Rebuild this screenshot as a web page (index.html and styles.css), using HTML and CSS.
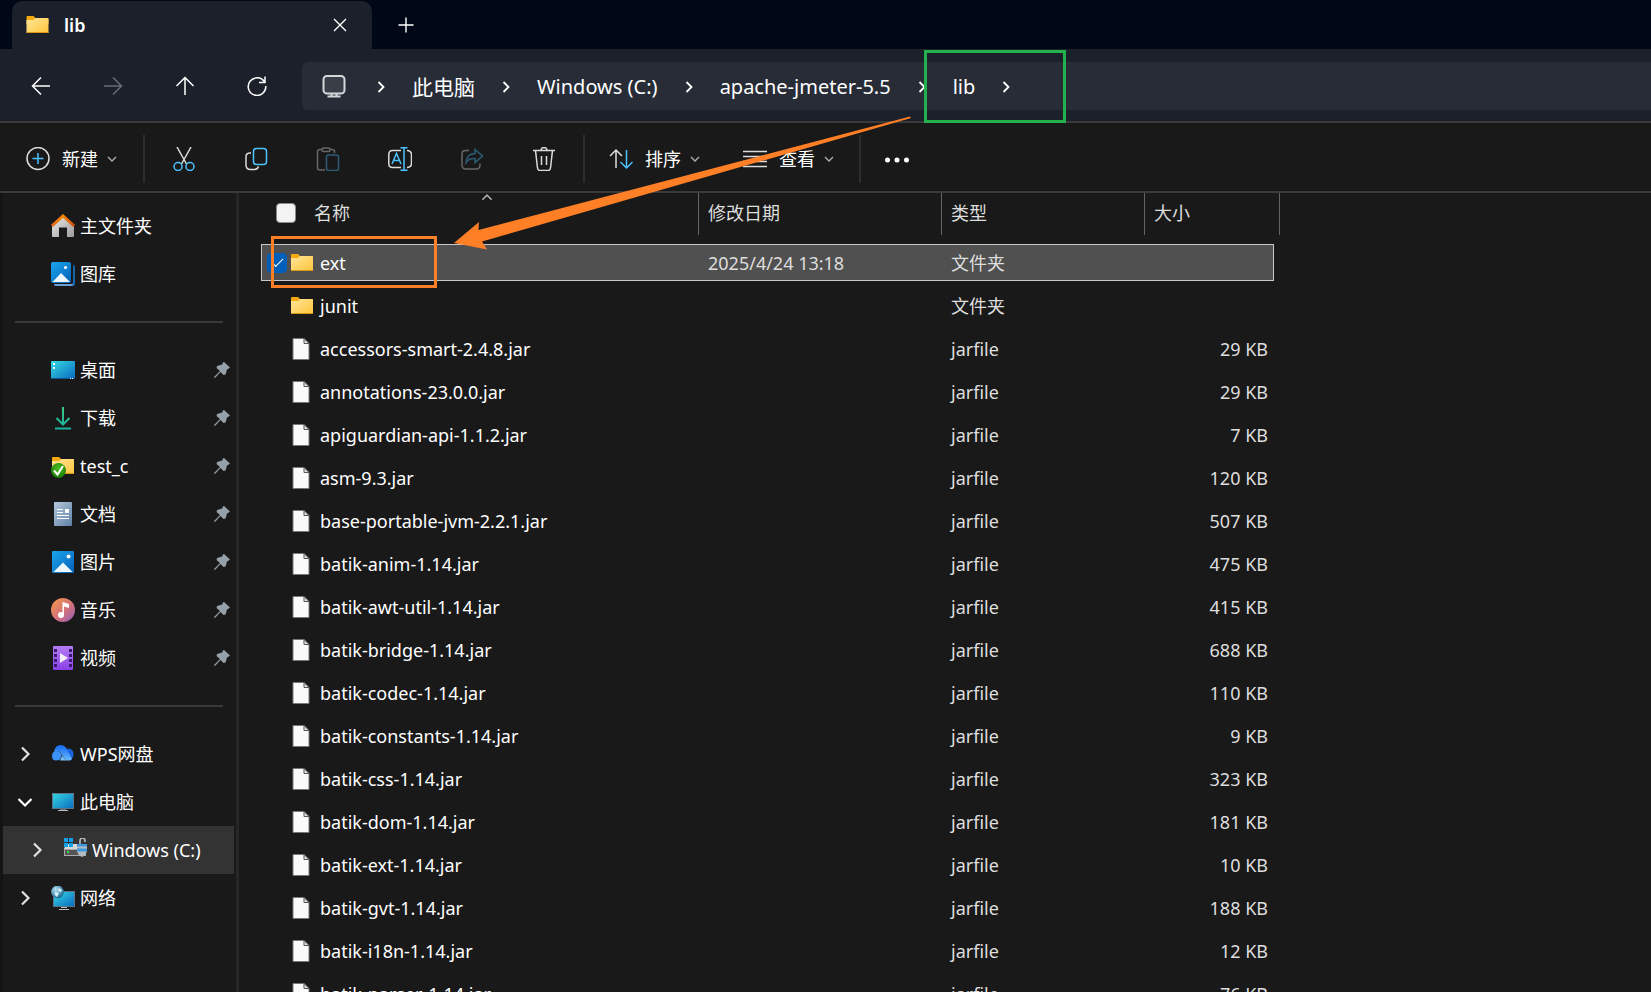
FILE: index.html
```html
<!DOCTYPE html>
<html lang="zh-CN">
<head>
<meta charset="UTF-8" />
<meta name="viewport" content="width=device-width, initial-scale=1.0" />
<title>lib</title>
<link rel="stylesheet" href="styles.css">
</head>
<body>

<svg class="defs" aria-hidden="true">
  <defs>
    <linearGradient id="gFolder" x1="0" y1="0" x2="1" y2="1"><stop offset="0" stop-color="#ffe59a"/><stop offset="1" stop-color="#ffc53a"/></linearGradient>
    <linearGradient id="gBlue" x1="0" y1="0" x2="1" y2="1"><stop offset="0" stop-color="#1ba6ec"/><stop offset="1" stop-color="#0560b8"/></linearGradient>
    <linearGradient id="gCyan" x1="0" y1="0" x2="1" y2="1"><stop offset="0" stop-color="#35dbe3"/><stop offset="1" stop-color="#0a68c0"/></linearGradient>
    <linearGradient id="gGrey" x1="0" y1="0" x2="1" y2="1"><stop offset="0" stop-color="#ececec"/><stop offset="1" stop-color="#9b9b9b"/></linearGradient>
    <linearGradient id="gRoof" x1="0" y1="0" x2="1" y2="0"><stop offset="0" stop-color="#e06410"/><stop offset=".5" stop-color="#f48a0a"/><stop offset="1" stop-color="#d4480e"/></linearGradient>
    <linearGradient id="gDoc" x1="0" y1="0" x2="1" y2="1"><stop offset="0" stop-color="#b4c8dc"/><stop offset="1" stop-color="#5f80a6"/></linearGradient>
    <linearGradient id="gMusic" x1="0" y1="0" x2="1" y2="1"><stop offset="0.1" stop-color="#f29050"/><stop offset=".6" stop-color="#cf6f80"/><stop offset="1" stop-color="#8f5cc0"/></linearGradient>
    <linearGradient id="gVideo" x1="0" y1="0" x2="0" y2="1"><stop offset="0" stop-color="#b47cf4"/><stop offset="1" stop-color="#8a3fe6"/></linearGradient>
    <linearGradient id="gDown" x1="0" y1="0" x2="0" y2="24" gradientUnits="userSpaceOnUse"><stop offset="0" stop-color="#3ccb80"/><stop offset="1" stop-color="#16b0a0"/></linearGradient>
    <linearGradient id="gCloud" x1="0" y1="0" x2="0" y2="1"><stop offset="0" stop-color="#1268f0"/><stop offset="1" stop-color="#68bafc"/></linearGradient>
    <radialGradient id="gGreen" cx=".5" cy=".35" r=".65"><stop offset="0" stop-color="#4cc022"/><stop offset="1" stop-color="#1a7a08"/></radialGradient>
    <radialGradient id="gGlobe" cx=".35" cy=".3" r=".7"><stop offset="0" stop-color="#b8e2f2"/><stop offset="1" stop-color="#1d6c96"/></radialGradient>
  </defs>
  <symbol id="folder" viewBox="0 0 22 18">
    <path d="M0 1q0-1 1-1h6l2 2h12q1 0 1 1v5H0z" fill="#f5aa10"/>
    <path d="M0 4h7l2-2h12q1 0 1 1v13.500q0 .5-.5.500H.5q-.5 0-.5-.5z" fill="url(#gFolder)"/>
    <path d="M0 16.500h22" stroke="#d9971a"/>
  </symbol>
  <symbol id="file" viewBox="0 0 18 22">
    <path d="M1 .5h11l5 5v16H1z" fill="#fafafa" stroke="#777"/>
    <path d="M12 .5v5h5z" fill="#e4e4e4" stroke="#555"/>
  </symbol>
  <symbol id="crumb" viewBox="0 0 8 12"><path d="M1.500 1l5 5-5 5" fill="none" stroke="currentColor" stroke-width="1.800"/></symbol>
  <symbol id="caret" viewBox="0 0 10 6"><path d="M1 1l4 4 4-4" fill="none" stroke="currentColor" stroke-width="1.300"/></symbol>
  <symbol id="tree" viewBox="0 0 16 16"><path d="M5 1.500L11.500 8 5 14.500" fill="none" stroke="currentColor" stroke-width="2.200"/></symbol>
  <symbol id="pin" viewBox="0 0 16 16">
    <path d="M10 0l6 5.500-2 1.500-1 .5-1.500 5-2 .500-3-3L1.500 15.500 0 16l.5-1.500L6 9 2.500 6l.5-2 5-1.500L9 .5z" fill="#95a0a8"/>
  </symbol>
  <symbol id="monitor" viewBox="0 0 24 24">
    <rect x="1" y="3" width="22" height="16" fill="url(#gCyan)"/>
    <path d="M1.500 3.500h21v15h-21z" fill="none" stroke="#5d7484"/>
    <path d="M9 19h6v2H9z" fill="#667"/><path d="M7 20.500h10" stroke="#b8c0c6"/>
  </symbol>
</svg>

<header class="tabs">
  <div class="tab">
    <svg class="tab-icon"><use href="#folder"/></svg>
    <span class="tab-name">lib</span>
    <button class="tab-close" aria-label="关闭"><svg width="14" height="14" viewBox="0 0 14 14"><path d="M1 1l12 12M13 1L1 13"/></svg></button>
  </div>
  <button class="tab-new" aria-label="新建标签页"><svg width="16" height="16" viewBox="0 0 16 16"><path d="M8 .5v15M.5 8h15"/></svg></button>
</header>

<nav class="navbar">
  <button class="nav-btn" aria-label="后退"><svg viewBox="0 0 20 20"><path d="M19 10H1.500M10 1.500L1.500 10l8.500 8.500"/></svg></button>
  <button class="nav-btn" aria-label="前进" disabled><svg viewBox="0 0 20 20"><path d="M1 10h17.500M10 1.500l8.500 8.500-8.500 8.500"/></svg></button>
  <button class="nav-btn" aria-label="向上"><svg viewBox="0 0 20 20"><path d="M10 19V1.500M1.500 10L10 1.500l8.500 8.500"/></svg></button>
  <button class="nav-btn" aria-label="刷新"><svg viewBox="0 0 20 20"><path d="M17.500 6A8.800 8.800 0 1 0 18.800 10M18 .5V6.500h-6"/></svg></button>
  <div class="address">
    <svg class="pc" viewBox="0 0 24 24"><rect x="1.500" y="1" width="21" height="17.500" rx="3.500" fill="#3a3e47"/><path d="M9.500 18.500v3M14.500 18.500v3M5.500 21.500h13"/></svg>
    <svg class="crumb"><use href="#crumb"/></svg>
    <button class="part cjk">此电脑</button>
    <svg class="crumb"><use href="#crumb"/></svg>
    <button class="part">Windows (C:)</button>
    <svg class="crumb"><use href="#crumb"/></svg>
    <button class="part">apache-jmeter-5.5</button>
    <svg class="crumb"><use href="#crumb"/></svg>
    <button class="part">lib</button>
    <svg class="crumb"><use href="#crumb"/></svg>
  </div>
</nav>

<div class="toolbar">
  <button class="tool new">
    <svg viewBox="0 0 24 24"><circle cx="12" cy="11.500" r="11"/><path class="blue" d="M12 6v11M6.500 11.500h11"/></svg>
    <span>新建</span>
    <svg class="caret"><use href="#caret"/></svg>
  </button>
  <span class="sep"></span>
  <div class="icons">
    <button class="tool" aria-label="剪切"><svg viewBox="0 0 24 24"><path d="M5 0l9.500 17M19 0L9.500 17"/><circle class="blue" cx="6" cy="19.500" r="4"/><circle class="blue" cx="18" cy="19.500" r="4"/></svg></button>
    <button class="tool" aria-label="复制"><svg viewBox="0 0 24 24"><path d="M7 6H5.500Q2 6.500 2 9.500V18q0 4.500 4.500 4.500h4q3 0 4-3"/><rect class="blue" x="9.500" y="1.500" width="13" height="16" rx="3"/></svg></button>
    <button class="tool" aria-label="粘贴" disabled><svg viewBox="0 0 24 24"><path d="M6 2.500H4q-2.500 0-2.500 2v16.500q0 2 2.500 2h5M14 2.500h2q2.500 0 2.500 2V6"/><rect x="6" y="1" width="8" height="3.500" rx="1.500"/><rect class="blue" x="10.500" y="8" width="12" height="15.500" rx="2"/></svg></button>
    <button class="tool" aria-label="重命名"><svg viewBox="0 0 24 24"><path d="M13 3.500H4.500Q.8 3.500.8 7.500v9q0 4 3.700 4H13M19 3.500q4.500.5 4.500 4v9q0 3.500-4.500 4"/><path class="blue" d="M16 1v22M12.500 .8h7M12.500 23.300h7M4 17L8.500 6.500 13 17M5.500 13.500h6"/></svg></button>
    <button class="tool" aria-label="共享" disabled><svg viewBox="0 0 24 24"><path d="M9 3.500H5.500Q2 3.500 2 7v11q0 4 4 4h10q4 0 4-4v-1.500"/><path class="blue" d="M15 2.500l7.500 6.500-7.500 6.500v-4Q9 11 6 15.500 6.500 7 15 6.500z"/></svg></button>
    <button class="tool" aria-label="删除"><svg viewBox="0 0 24 24"><path d="M1 3.500h22M9 3.500q0-3 3-3t3 3M3.500 3.500l2 17.500q.3 2.500 2.500 2.500h8q2.200 0 2.500-2.500l2-17.500M9.500 9v9M14.500 9v9"/></svg></button>
  </div>
  <span class="sep"></span>
  <button class="tool sort">
    <svg viewBox="0 0 24 24"><path d="M7 21V3M1 9l6-6 6 6"/><path class="blue" d="M17.500 3v18M11.500 15l6 6 6-6"/></svg>
    <span>排序</span>
    <svg class="caret"><use href="#caret"/></svg>
  </button>
  <button class="tool view">
    <svg viewBox="0 0 24 24"><path d="M0 4.500h24M0 9.500h24M0 14.500h24M0 19.500h24"/></svg>
    <span>查看</span>
    <svg class="caret"><use href="#caret"/></svg>
  </button>
  <span class="sep"></span>
  <button class="tool more" aria-label="更多"><svg viewBox="0 0 24 24"><circle cx="2.500" cy="13" r="2.500"/><circle cx="12" cy="13" r="2.500"/><circle cx="21.500" cy="13" r="2.500"/></svg></button>
</div>

<main class="content">
  <aside class="sidebar">
    <ul>
      <li>
        <svg class="ico" viewBox="0 0 24 24"><path d="M1 11L12 2l11 9v11q0 1-1 1h-6v-9.500H8V23H2q-1 0-1-1z" fill="url(#gGrey)"/><path d="M.8 12L12 2l11.200 10" fill="none" stroke="url(#gRoof)" stroke-width="3"/></svg>
        <span>主文件夹</span>
      </li>
      <li>
        <svg class="ico" viewBox="0 0 24 24"><path d="M22 3q2 0 2 2v17q0 2-2 2H5q-2 0-2-2h17q2 0 2-2z" fill="#1565ac"/><path d="M3 22h19q0 2-2 2H5q-2 0-2-2z" fill="#6a9fd8"/><rect width="20" height="21" rx="2" fill="url(#gBlue)"/><path d="M1.500 20l8.500-9 9 9z" fill="#eef6ff"/><circle cx="14.500" cy="5.500" r="1.600" fill="#fff"/></svg>
        <span>图库</span>
      </li>
      <li class="line"></li>
      <li>
        <svg class="ico" viewBox="0 0 24 24"><rect y="3" width="24" height="18" rx="1" fill="url(#gCyan)"/><path d="M2 5h2v2H2zM2 9h2v2H2z" fill="#fff"/><path d="M0 20.500h24" stroke="#0b5798"/><path d="M19 20h1v1h-1zM21 20h1v1h-1z" fill="#fff"/></svg>
        <span>桌面</span><svg class="pin"><use href="#pin"/></svg>
      </li>
      <li>
        <svg class="ico" viewBox="0 0 24 24"><path d="M12 1v17M5.500 12l6.500 6.500 6.500-6.500M4 22.500h16" fill="none" stroke="url(#gDown)" stroke-width="2"/></svg>
        <span>下载</span><svg class="pin"><use href="#pin"/></svg>
      </li>
      <li>
        <svg class="ico" viewBox="0 0 24 24"><use href="#folder" x="1" y="3" width="22" height="18"/><circle cx="7.500" cy="16.500" r="7.500" fill="url(#gGreen)"/><path d="M3 16.500l3.500 4L12 12" fill="none" stroke="#fff" stroke-width="2"/></svg>
        <span>test_c</span><svg class="pin"><use href="#pin"/></svg>
      </li>
      <li>
        <svg class="ico" viewBox="0 0 24 24"><rect x="3" width="18" height="24" rx="1" fill="url(#gDoc)"/><path d="M6 7.500h6M6 10.500h6M6 13.500h12M6 16.500h12" stroke="#fff"/><path d="M14 7h4v4h-4z" fill="#fff"/></svg>
        <span>文档</span><svg class="pin"><use href="#pin"/></svg>
      </li>
      <li>
        <svg class="ico" viewBox="0 0 24 24"><rect x="1" y="1" width="22" height="22" rx="1" fill="url(#gBlue)"/><path d="M2.500 22L12 12.500l9.500 9.500z" fill="#eef6ff"/><circle cx="17.500" cy="6.500" r="2" fill="#fff"/></svg>
        <span>图片</span><svg class="pin"><use href="#pin"/></svg>
      </li>
      <li>
        <svg class="ico" viewBox="0 0 24 24"><circle cx="12" cy="12" r="12" fill="url(#gMusic)"/><circle cx="10" cy="17" r="3" fill="#fff"/><path d="M11.500 4l6.500 2v4l-5-1.500V17h-1.500z" fill="#fff"/></svg>
        <span>音乐</span><svg class="pin"><use href="#pin"/></svg>
      </li>
      <li>
        <svg class="ico" viewBox="0 0 24 24"><rect x="2" width="20" height="24" rx="1" fill="url(#gVideo)"/><path d="M4.500 3v20M19.500 3v20" stroke="#3a1a6e" stroke-width="3" stroke-dasharray="3 2"/><path d="M9 7l8 5-8 5z" fill="#f4eefc"/></svg>
        <span>视频</span><svg class="pin"><use href="#pin"/></svg>
      </li>
      <li class="line"></li>
      <li>
        <svg class="tree"><use href="#tree"/></svg>
        <svg class="ico" viewBox="0 0 24 24"><path d="M14 8q4-3 7 0 2.500 3 1 7-1.500 3-4 3z" fill="#1a62dc"/><path d="M3 10Q4 3 9.500 3q4.500 0 6.500 4.500L21 17q-1 1.500-3 1.500-4 0-6-4-2-4.500-5-5.500z" fill="url(#gCloud)"/><path d="M1 14q0-5 5-5 3 0 5 4.500-1.500 1.500-2.500 4.500l-4 .500Q1 18 1 14z" fill="#3c92f6"/><path d="M9 18.500q.5-3 2.500-4.500 2 4 6 4.500z" fill="#74c0fc"/></svg>
        <span>WPS网盘</span>
      </li>
      <li>
        <svg class="tree open"><use href="#tree"/></svg>
        <svg class="ico"><use href="#monitor"/></svg>
        <span>此电脑</span>
      </li>
      <li class="child active">
        <svg class="tree"><use href="#tree"/></svg>
        <svg class="ico" viewBox="0 0 24 24"><path d="M1 11l2-5h18l2 5z" fill="#d8d8d8"/><rect x="1.500" y="11.500" width="21" height="6" fill="#555" stroke="#aaa"/><path d="M4 13h2v2H4z" fill="#30e030"/><path d="M1 0h4v4H1zM6 0h4v4H6zM1 5h4v4H1zM6 5h4v4H6z" fill="#12a0e8"/><path d="M17 6V3q0-3 2.500-3T22 3v1" fill="none" stroke="#b8bec4" stroke-width="1.600"/><path d="M14 6h10v5q0 6-5 8-5-2-5-8z" fill="#b4bcc4"/><path d="M14 6h10v2.500H14zM14 10.500h10l-.5 3h-9z" fill="#3a98dc"/></svg>
        <span>Windows (C:)</span>
      </li>
      <li>
        <svg class="tree"><use href="#tree"/></svg>
        <svg class="ico" viewBox="0 0 24 24"><rect x="2.500" y="5.500" width="21" height="15" fill="url(#gCyan)" stroke="#5d7484"/><path d="M8 23.500h10M10 21.500h6" stroke="#b8c0c6"/><circle cx="6.500" cy="6" r="6.300" fill="url(#gGlobe)"/><path d="M4 6l4 1-2 4q-3-2-2-5zM8 2l3 2-1 2-3-1z" fill="#d8eff6"/></svg>
        <span>网络</span>
      </li>
    </ul>
  </aside>

  <section class="files">
    <table>
      <thead>
        <tr>
          <th class="name"><div><input type="checkbox" aria-label="全选"><span>名称</span><svg class="asc"><use href="#caret"/></svg></div></th>
          <th class="date"><div>修改日期</div></th>
          <th class="type"><div>类型</div></th>
          <th class="size"><div>大小</div></th>
        </tr>
      </thead>
      <tbody>
        <tr class="selected"><td><input type="checkbox" aria-label="ext" checked><svg class="dir"><use href="#folder"/></svg>ext</td><td>2025/4/24 13:18</td><td>文件夹</td><td></td></tr>
        <tr><td><svg class="dir"><use href="#folder"/></svg>junit</td><td></td><td>文件夹</td><td></td></tr>
        <tr><td><svg class="jar"><use href="#file"/></svg>accessors-smart-2.4.8.jar</td><td></td><td>jarfile</td><td>29 KB</td></tr>
        <tr><td><svg class="jar"><use href="#file"/></svg>annotations-23.0.0.jar</td><td></td><td>jarfile</td><td>29 KB</td></tr>
        <tr><td><svg class="jar"><use href="#file"/></svg>apiguardian-api-1.1.2.jar</td><td></td><td>jarfile</td><td>7 KB</td></tr>
        <tr><td><svg class="jar"><use href="#file"/></svg>asm-9.3.jar</td><td></td><td>jarfile</td><td>120 KB</td></tr>
        <tr><td><svg class="jar"><use href="#file"/></svg>base-portable-jvm-2.2.1.jar</td><td></td><td>jarfile</td><td>507 KB</td></tr>
        <tr><td><svg class="jar"><use href="#file"/></svg>batik-anim-1.14.jar</td><td></td><td>jarfile</td><td>475 KB</td></tr>
        <tr><td><svg class="jar"><use href="#file"/></svg>batik-awt-util-1.14.jar</td><td></td><td>jarfile</td><td>415 KB</td></tr>
        <tr><td><svg class="jar"><use href="#file"/></svg>batik-bridge-1.14.jar</td><td></td><td>jarfile</td><td>688 KB</td></tr>
        <tr><td><svg class="jar"><use href="#file"/></svg>batik-codec-1.14.jar</td><td></td><td>jarfile</td><td>110 KB</td></tr>
        <tr><td><svg class="jar"><use href="#file"/></svg>batik-constants-1.14.jar</td><td></td><td>jarfile</td><td>9 KB</td></tr>
        <tr><td><svg class="jar"><use href="#file"/></svg>batik-css-1.14.jar</td><td></td><td>jarfile</td><td>323 KB</td></tr>
        <tr><td><svg class="jar"><use href="#file"/></svg>batik-dom-1.14.jar</td><td></td><td>jarfile</td><td>181 KB</td></tr>
        <tr><td><svg class="jar"><use href="#file"/></svg>batik-ext-1.14.jar</td><td></td><td>jarfile</td><td>10 KB</td></tr>
        <tr><td><svg class="jar"><use href="#file"/></svg>batik-gvt-1.14.jar</td><td></td><td>jarfile</td><td>188 KB</td></tr>
        <tr><td><svg class="jar"><use href="#file"/></svg>batik-i18n-1.14.jar</td><td></td><td>jarfile</td><td>12 KB</td></tr>
        <tr><td><svg class="jar"><use href="#file"/></svg>batik-parser-1.14.jar</td><td></td><td>jarfile</td><td>76 KB</td></tr>
      </tbody>
    </table>
  </section>
</main>

<!-- marks drawn over the window -->
<div class="mark mark-green"></div>
<div class="mark mark-orange"></div>
<svg class="arrow" viewBox="0 0 458 134"><path d="M0 127L25 106l-.5 8L456 .5l1 1.500L28 125.500l5 8z" fill="#ff7f27"/></svg>

</body>
</html>
```
FILE: styles.css
```css
* { box-sizing: border-box; }
body { margin: 0; height: 100vh; overflow: hidden; display: flex; flex-direction: column; background: #191919; color: #fff; font-family: "Noto Sans", "Noto Sans CJK SC", sans-serif; font-size: 18px; line-height: 24px; }
button { background: none; border: none; padding: 0; margin: 0; color: inherit; font: inherit; cursor: pointer; }
svg { display: block; flex: none; }
.defs { position: absolute; width: 0; height: 0; }

/* tabs */
.tabs { display: flex; flex: none; height: 49px; padding: 1px 0 0 12px; background: #000818; }
.tab { display: flex; align-items: center; width: 360px; padding: 0 25px 0 14px; background: #1b202b; border-radius: 10px 10px 0 0; }
.tab-icon { width: 23px; height: 18px; }
.tab-name { flex: 1; margin-left: 15px; font-weight: 600; }
.tab-close svg, .tab-new svg { fill: none; stroke: #fff; stroke-width: 1.4; }
.tab-new { display: flex; align-items: center; margin-left: 26px; }

/* navigation */
.navbar { display: flex; flex: none; align-items: center; height: 72px; padding: 2px 0 0 5px; background: #1b202b; }
.nav-btn { width: 72px; height: 48px; display: flex; align-items: center; justify-content: center; }
.nav-btn svg { width: 20px; height: 20px; fill: none; stroke: #fff; stroke-width: 1.5; }
.nav-btn:disabled svg { stroke: #6a6e76; }
.address { flex: 1; display: flex; align-items: center; gap: 27px; height: 48px; margin-left: 9px; padding: 2px 0 0 20px; background: #272c36; border-radius: 6px 0 0 6px; font-size: 20px; white-space: nowrap; }
.address .cjk { font-size: 21px; }
.pc { width: 24px; height: 24px; margin-right: 4px; fill: none; stroke: #d6d7da; stroke-width: 2; }
.crumb { width: 8px; height: 12px; }

/* commands */
.toolbar { display: flex; flex: none; align-items: center; height: 72px; border-top: 2px solid #3a3a3a; border-bottom: 2px solid #3a3a3a; padding: 4px 0 0 26px; }
.tool { display: flex; align-items: center; gap: 12px; }
.tool svg { width: 24px; height: 24px; fill: none; stroke: #dcdcdc; stroke-width: 1.5; }
.tool svg .blue { stroke: #4cc2ff; }
.tool:disabled svg { opacity: .4; }
.tool .caret { width: 10px; height: 6px; margin-left: -3px; color: #b0b0b0; stroke: none; }
.sep { width: 2px; height: 48px; background: #2d2d2d; }
.new { margin-right: 26px; }
.icons { display: flex; gap: 48px; padding: 0 27px; }
.sort { margin: 0 43px 0 24px; }
.view { margin-right: 25px; }
.more { margin-left: 24px; }
.tool.more svg { fill: #fff; stroke: none; }

/* sidebar */
.content { flex: 1; display: flex; min-height: 0; }
.sidebar { flex: none; width: 239px; border-left: 3px solid #141414; border-right: 3px solid #262626; }
.sidebar ul { list-style: none; margin: 0; padding: 9px 2px 0 0; }
.sidebar li { display: flex; align-items: center; height: 48px; padding: 0 4px 0 48px; }
.sidebar .line::before { content: ""; height: 2px; flex: 1; margin: 0 7px 0 -36px; background: #3a3a3a; }
.ico { width: 24px; height: 24px; margin-right: 5px; }
.tree { width: 16px; height: 16px; margin: 0 18px 0 -34px; color: #e0e0e0; }
.tree.open { transform: rotate(90deg); color: #fff; }
.pin { width: 16px; height: 16px; margin-left: auto; }
.sidebar .child { padding-left: 60px; }
.sidebar .active { background: #333; }

/* file list */
.files { flex: 1; min-width: 0; overflow: hidden; padding-left: 22px; }
table { width: 1013px; margin-top: -6px; table-layout: fixed; border-collapse: separate; border-spacing: 0 6px; }
th { height: 45px; padding: 0; vertical-align: top; text-align: left; font-weight: 400; color: #dedede; }
th div { position: relative; display: flex; align-items: center; height: 42px; padding: 0 0 2px 9px; border-right: 1px solid #636363; }
th.name { width: 438px; }
th.date { width: 243px; }
th.type { width: 203px; }
th.name div { padding-left: 15px; gap: 18px; }
th.size div { margin-right: -6px; }
.asc { position: absolute; left: 220px; top: 1px; width: 12px; height: 7px; transform: scaleY(-1); color: #b0b0b0; }
td { height: 37px; padding: 0 6px 0 9px; color: #dedede; border: solid transparent; border-width: 1px 0; white-space: nowrap; }
td:first-child { padding-left: 29px; border-left-width: 1px; color: #fff; }
td:last-child { text-align: right; border-right-width: 1px; padding-right: 5px; }
td svg { display: inline-block; vertical-align: top; }
.dir { width: 22px; height: 18px; margin: 3px 7px 0 0; }
.jar { width: 18px; height: 22px; margin: 1px 10px 0 1px; }
.selected td { background: #505050; border-color: #c8c8c8; }
.selected td:first-child { padding-left: 5px; }
input[type="checkbox"] { appearance: none; width: 20px; height: 20px; margin: 0; background: #f3f3f3; border: 1px solid #8a8a8a; border-radius: 4px; }
input[type="checkbox"]:checked { display: inline-flex; align-items: center; justify-content: center; vertical-align: top; margin: 2px 4px 0 0; background: #005fb8; border-color: #005fb8; }
input[type="checkbox"]:checked::before { content: ""; width: 10px; height: 5px; margin-top: -3px; border: solid #fff; border-width: 0 0 1px 1px; transform: rotate(-45deg); }

/* annotations */
.mark { position: absolute; border: 3px solid; }
.mark-green { left: 924px; top: 50px; width: 142px; height: 73px; border-color: #22b14c; }
.mark-orange { left: 271px; top: 236px; width: 166px; height: 52px; border-color: #ff7f27; }
.arrow { position: absolute; left: 454px; top: 116px; width: 458px; height: 134px; }
```
